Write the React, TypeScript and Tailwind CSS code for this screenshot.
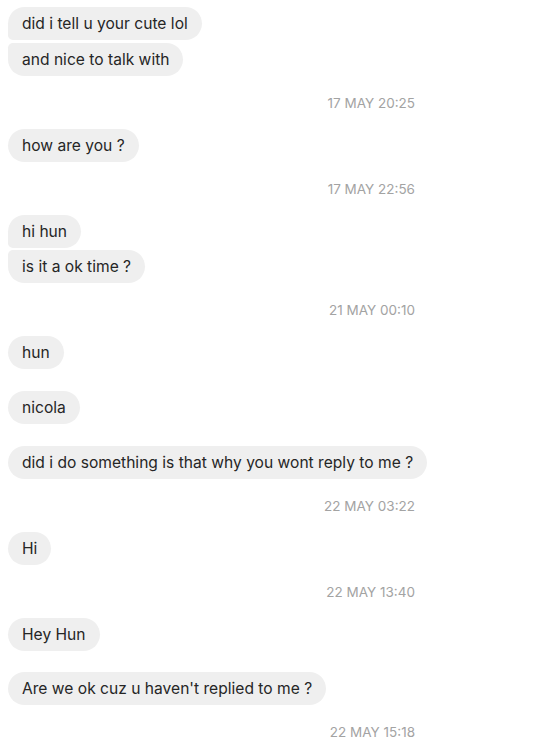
import React from "react";

type Item =
  | { kind: "msg"; text: string; pos?: "first" | "last" | "single"; gapTop?: number }
  | { kind: "ts"; text: string };

const items: Item[] = [
  { kind: "msg", text: "did i tell u your cute lol", pos: "first" },
  { kind: "msg", text: "and nice to talk with", pos: "last", gapTop: 3 },
  { kind: "ts", text: "17 May 20:25" },
  { kind: "msg", text: "how are you ?" },
  { kind: "ts", text: "17 May 22:56" },
  { kind: "msg", text: "hi hun", pos: "first" },
  { kind: "msg", text: "is it a ok time ?", pos: "last", gapTop: 2 },
  { kind: "ts", text: "21 May 00:10" },
  { kind: "msg", text: "hun" },
  { kind: "msg", text: "nicola", gapTop: 22 },
  { kind: "msg", text: "did i do something is that why you wont reply to me ?", gapTop: 22 },
  { kind: "ts", text: "22 May 03:22" },
  { kind: "msg", text: "Hi" },
  { kind: "ts", text: "22 May 13:40" },
  { kind: "msg", text: "Hey Hun" },
  { kind: "msg", text: "Are we ok cuz u haven't replied to me ?", gapTop: 21 },
  { kind: "ts", text: "22 May 15:18" },
];

function Bubble({ text, pos }: { text: string; pos?: string }) {
  const radius =
    pos === "first"
      ? "rounded-[17px] rounded-bl-[5px]"
      : pos === "last"
      ? "rounded-[17px] rounded-tl-[5px]"
      : "rounded-[17px]";
  return (
    <div
      className={`self-start h-[33px] flex items-center pl-[14px] pr-[14px] pt-[1px] bg-[#efefef] text-[#262626] text-[15.6px] ${radius}`}
    >
      {text}
    </div>
  );
}

export default function App() {
  return (
    <div
      className="w-[550px] h-[749px] overflow-hidden bg-white flex flex-col pt-[7px] pl-[8px]"
      style={{ fontFamily: "Inter, 'Liberation Sans', sans-serif" }}
    >
      {items.map((it, i) =>
        it.kind === "ts" ? (
          <div
            key={i}
            className="h-[53px] shrink-0 flex items-center justify-end pr-[135px] pt-[1px] text-[13.5px] uppercase text-[#a3a3a3]"
          >
            {it.text}
          </div>
        ) : (
          <div key={i} className="flex flex-col shrink-0" style={{ marginTop: it.gapTop ?? 0 }}>
            <Bubble text={it.text} pos={it.pos} />
          </div>
        )
      )}
    </div>
  );
}
